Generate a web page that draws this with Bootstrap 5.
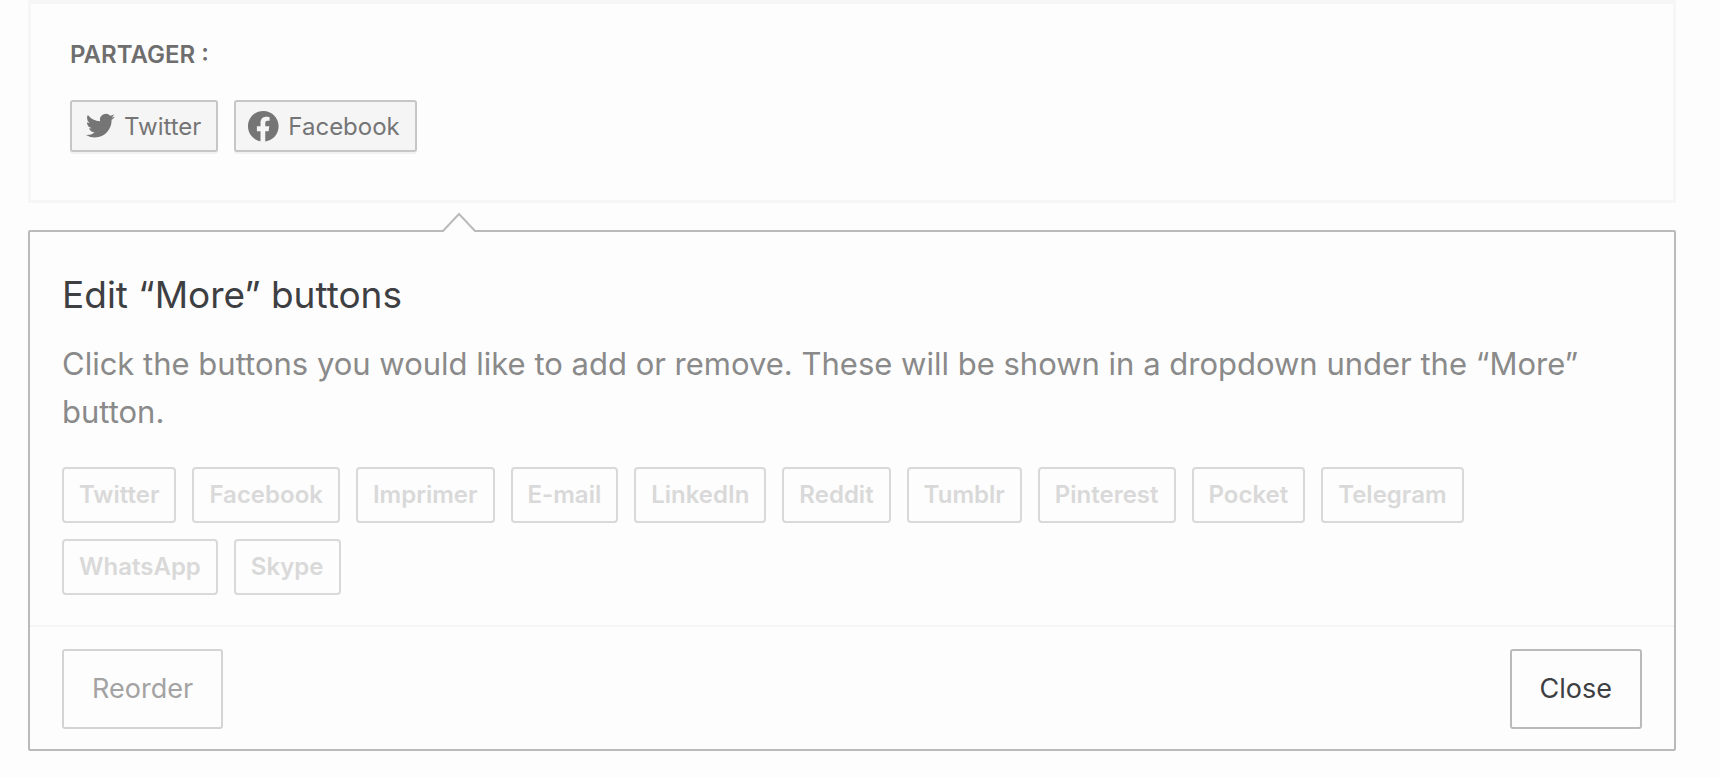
<!DOCTYPE html>
<html lang="fr">
<head>
<meta charset="utf-8">
<meta name="viewport" content="width=device-width, initial-scale=1">
<title>Sharing buttons</title>
<link href="https://cdn.jsdelivr.net/npm/bootstrap@5.3.0/dist/css/bootstrap.min.css" rel="stylesheet">
<style>
  body { background: #fdfdfd; font-family: Inter, "Liberation Sans", sans-serif; color: #3d3f42; }
  .page { padding: 0 44px 24px 28px; }
  .preview { border: 3px solid #f6f6f6; border-top-width: 4px; padding: 37px 39px 48px; margin-bottom: 27px; }
  .preview-title { font-size: 24px; line-height: 28px; font-weight: 600; color: #6e6e6e; margin-bottom: 31px; }
  .share-list { gap: 16px; }
  .share { --bs-btn-border-radius: 3px; --bs-btn-border-width: 2px; --bs-btn-border-color: #c6c6c6; --bs-btn-bg: #f5f5f5;
    --bs-btn-color: #757575; --bs-btn-font-size: 24px; --bs-btn-line-height: 32px;
    --bs-btn-hover-color: #555; --bs-btn-hover-bg: #f5f5f5; --bs-btn-hover-border-color: #999;
    padding: 9px 15px 7px 12px; box-shadow: 0 2px 0 #f1f1f1; }
  .share svg { width: 32px; height: 32px; fill: #757575; }
  .editor { border: 2px solid #bababa; border-radius: 2px; }
  .arrow { left: 410px; top: -20px; width: 38px; height: 20px; }
  .editor-main { padding: 38px 32px 30px; }
  .editor-title { font-size: 37px; line-height: 50px; font-weight: 400; margin-bottom: 20px; }
  .editor-text { font-size: 31px; line-height: 48px; color: #8a8a8a; margin-bottom: 31px; }
  .chips { gap: 16px; padding-right: 16px; }
  .chip { --bs-btn-border-radius: 4px; --bs-btn-border-width: 2px; --bs-btn-border-color: #d9d9d9; --bs-btn-color: #d9d9d9;
    --bs-btn-font-size: 24px; --bs-btn-font-weight: 600; --bs-btn-line-height: 32px; --bs-btn-padding-x: 15px; --bs-btn-padding-y: 10px;
    --bs-btn-hover-color: #aaa; --bs-btn-hover-border-color: #aaa; }
  .editor-foot { border-top: 2px solid #f6f6f6; padding: 22px 32px 20px; }
  .action { --bs-btn-border-radius: 3px; --bs-btn-border-width: 2px; --bs-btn-font-size: 27px; --bs-btn-line-height: 40px;
    --bs-btn-padding-x: 28px; --bs-btn-padding-y: 18px; --bs-btn-color: #3d3f42; --bs-btn-border-color: #bababa;
    --bs-btn-hover-border-color: #888; }
  .action-quiet { --bs-btn-color: #a3a3a3; --bs-btn-border-color: #d4d4d4; }
</style>
</head>
<body>
<main class="page">
  <section class="preview">
    <h2 class="preview-title">PARTAGER :</h2>
    <div class="d-flex flex-wrap share-list">
      <button type="button" class="btn share d-flex align-items-center gap-2">
        <svg viewBox="1 2 22 22" aria-hidden="true"><path d="M22.23 5.924a8.212 8.212 0 0 1-2.357.646 4.115 4.115 0 0 0 1.804-2.27 8.221 8.221 0 0 1-2.606.996 4.103 4.103 0 0 0-6.991 3.742 11.647 11.647 0 0 1-8.457-4.287 4.087 4.087 0 0 0-.556 2.063 4.1 4.1 0 0 0 1.825 3.415 4.09 4.09 0 0 1-1.859-.513v.052a4.104 4.104 0 0 0 3.292 4.023 4.099 4.099 0 0 1-1.853.07 4.11 4.11 0 0 0 3.833 2.85A8.236 8.236 0 0 1 2 18.411a11.616 11.616 0 0 0 6.29 1.843c7.547 0 11.675-6.252 11.675-11.675 0-.178-.004-.355-.012-.531a8.298 8.298 0 0 0 2.277-2.124z"/></svg>
        Twitter
      </button>
      <button type="button" class="btn share d-flex align-items-center gap-2">
        <svg viewBox="1 1 23 23" aria-hidden="true"><path d="M12 1C5.9 1 1 5.9 1 12c0 5.4 3.9 9.9 9 10.8V15.5H7.4V12H10V9.4c0-2.8 1.7-4.3 4.2-4.3 1.2 0 2.3.2 2.3.2V8h-1.4c-1.3 0-1.7.8-1.7 1.6V12h2.9l-.5 3.500h-2.400v7.400C19 22.300 23 17.600 23 12c0-6.100-4.900-11-11-11z"/></svg>
        Facebook
      </button>
    </div>
  </section>

  <section class="editor position-relative">
    <svg class="arrow position-absolute" viewBox="0 0 38 20" aria-hidden="true"><path d="M2 20 19 2 36 20" fill="#fdfdfd" stroke="#bababa" stroke-width="2"/></svg>
    <div class="editor-main">
      <h1 class="editor-title">Edit “More” buttons</h1>
      <p class="editor-text">Click the buttons you would like to add or remove. These will be shown in a dropdown under the “More” button.</p>
      <div class="d-flex flex-wrap chips">
        <button type="button" class="btn chip">Twitter</button>
        <button type="button" class="btn chip">Facebook</button>
        <button type="button" class="btn chip">Imprimer</button>
        <button type="button" class="btn chip">E-mail</button>
        <button type="button" class="btn chip">LinkedIn</button>
        <button type="button" class="btn chip">Reddit</button>
        <button type="button" class="btn chip">Tumblr</button>
        <button type="button" class="btn chip">Pinterest</button>
        <button type="button" class="btn chip">Pocket</button>
        <button type="button" class="btn chip">Telegram</button>
        <button type="button" class="btn chip">WhatsApp</button>
        <button type="button" class="btn chip">Skype</button>
      </div>
    </div>
    <div class="editor-foot d-flex justify-content-between">
      <button type="button" class="btn action action-quiet">Reorder</button>
      <button type="button" class="btn action">Close</button>
    </div>
  </section>
</main>
<script src="https://cdn.jsdelivr.net/npm/bootstrap@5.3.0/dist/js/bootstrap.bundle.min.js"></script>
</body>
</html>
